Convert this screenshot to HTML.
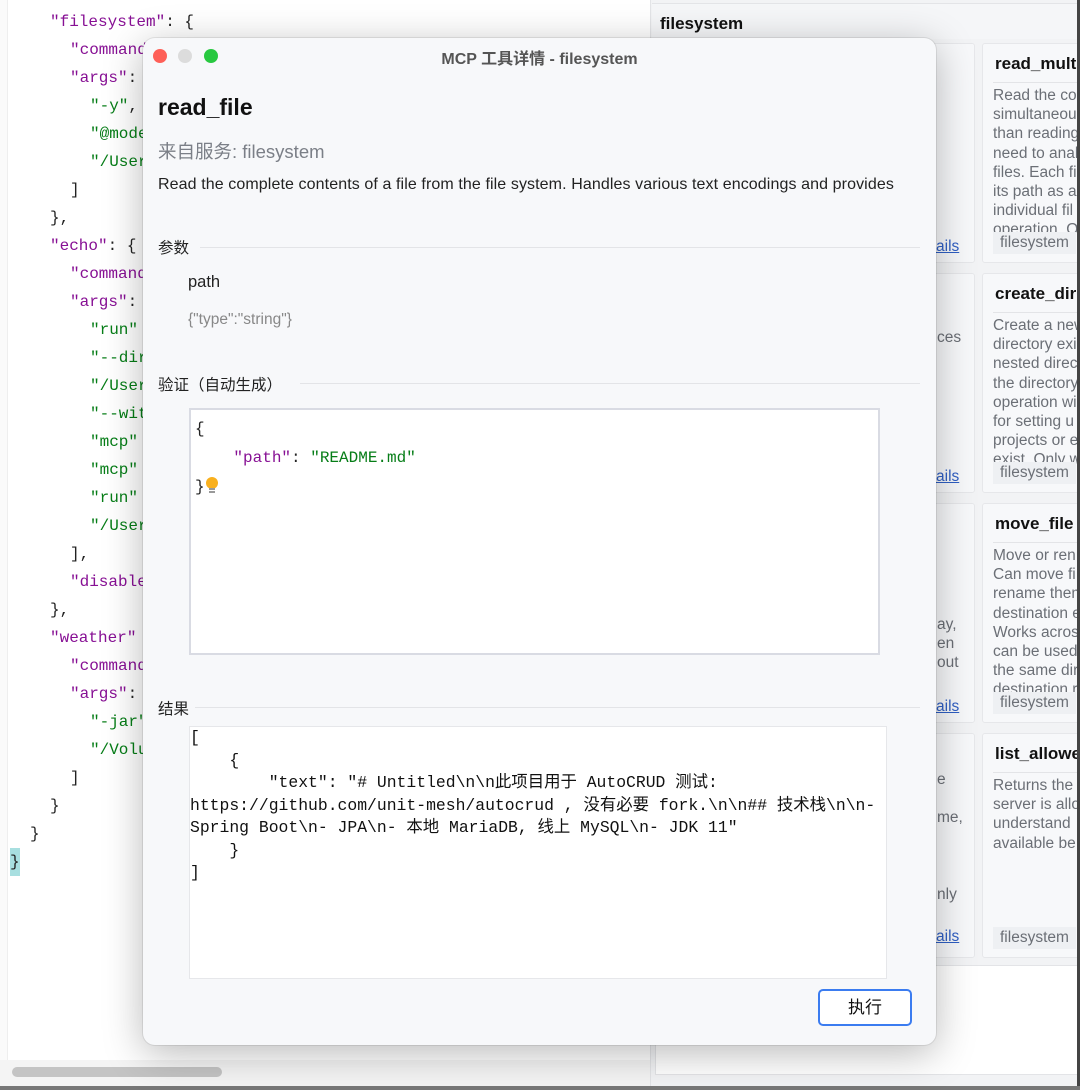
<!DOCTYPE html>
<html><head><meta charset="utf-8"><style>
*{margin:0;padding:0;box-sizing:border-box}
body{width:1080px;height:1090px;overflow:hidden;position:relative;background:#fff;font-family:"Liberation Sans","Noto Sans CJK SC",sans-serif}
.a{position:absolute;white-space:pre}
.code{font-family:"Liberation Mono","Noto Sans CJK SC",monospace;font-size:16px;color:#222}
.k{color:#871094}.s{color:#067d17}
.card{position:absolute;background:#f7f8fa;border:1px solid #e6e7ea;border-radius:3px;overflow:hidden}
.card .t{position:absolute;left:12px;top:10px;font-weight:bold;font-size:17px;color:#111;white-space:nowrap}
.card .hr{position:absolute;left:10px;right:0;top:38px;border-top:1px solid #e3e4e7}
.card .d{position:absolute;left:10px;top:42px;font-size:15.5px;line-height:19.2px;color:#6b6f76;white-space:pre}
.card .tag{position:absolute;left:10px;bottom:8px;background:#eef0f3;padding:2px 7px;font-size:15.5px;color:#6b6f76}
.lnk{position:absolute;color:#2f5fc4;text-decoration:underline;font-size:15.5px}
</style></head><body>
<div class="a" style="left:0;top:0;width:8px;height:1090px;background:#fafafa;border-right:1px solid #eee"></div>
<div class="a code" style="left:0;top:0;line-height:28px">
<div style="position:absolute;top:8px;left:50px"><span class="k">"filesystem"</span>: {</div>
<div style="position:absolute;top:36px;left:70px"><span class="k">"command</span></div>
<div style="position:absolute;top:64px;left:70px"><span class="k">"args"</span>:</div>
<div style="position:absolute;top:92px;left:90px"><span class="s">"-y"</span>,</div>
<div style="position:absolute;top:120px;left:90px"><span class="s">"@mode</span></div>
<div style="position:absolute;top:148px;left:90px"><span class="s">"/User</span></div>
<div style="position:absolute;top:176px;left:70px">]</div>
<div style="position:absolute;top:204px;left:50px">},</div>
<div style="position:absolute;top:232px;left:50px"><span class="k">"echo"</span>: {</div>
<div style="position:absolute;top:260px;left:70px"><span class="k">"command</span></div>
<div style="position:absolute;top:288px;left:70px"><span class="k">"args"</span>:</div>
<div style="position:absolute;top:316px;left:90px"><span class="s">"run"</span></div>
<div style="position:absolute;top:344px;left:90px"><span class="s">"--dir</span></div>
<div style="position:absolute;top:372px;left:90px"><span class="s">"/User</span></div>
<div style="position:absolute;top:400px;left:90px"><span class="s">"--wit</span></div>
<div style="position:absolute;top:428px;left:90px"><span class="s">"mcp"</span></div>
<div style="position:absolute;top:456px;left:90px"><span class="s">"mcp"</span></div>
<div style="position:absolute;top:484px;left:90px"><span class="s">"run"</span></div>
<div style="position:absolute;top:512px;left:90px"><span class="s">"/User</span></div>
<div style="position:absolute;top:540px;left:70px">],</div>
<div style="position:absolute;top:568px;left:70px"><span class="k">"disable</span></div>
<div style="position:absolute;top:596px;left:50px">},</div>
<div style="position:absolute;top:624px;left:50px"><span class="k">"weather"</span></div>
<div style="position:absolute;top:652px;left:70px"><span class="k">"command</span></div>
<div style="position:absolute;top:680px;left:70px"><span class="k">"args"</span>:</div>
<div style="position:absolute;top:708px;left:90px"><span class="s">"-jar"</span></div>
<div style="position:absolute;top:736px;left:90px"><span class="s">"/Volu</span></div>
<div style="position:absolute;top:764px;left:70px">]</div>
<div style="position:absolute;top:792px;left:50px">}</div>
<div style="position:absolute;top:820px;left:30px">}</div>
<div style="position:absolute;top:848px;left:10px;background:#a8dfe0">}</div>
</div>
<div class="a" style="left:0;top:1060px;width:650px;height:30px;background:#f4f4f4"></div>
<div class="a" style="left:12px;top:1067px;width:210px;height:10px;border-radius:5px;background:#c4c4c4"></div>
<div class="a" style="left:0;top:1086px;width:1080px;height:4px;background:#777"></div>
<div class="a" style="left:650px;top:0;width:428px;height:1086px;background:#f2f3f5;border-left:1px solid #e3e4e7"></div>
<div class="a" style="left:652px;top:3px;width:428px;height:36px;background:#f5f6f8;border-top:1px solid #e3e4e7"></div>
<div class="a" style="left:660px;top:14px;font-weight:bold;font-size:17px;color:#111">filesystem</div>
<div class="card" style="left:655px;top:43px;width:320px;height:220px"></div>
<div class="lnk" style="left:936px;top:238px">ails</div>
<div class="card" style="left:655px;top:273px;width:320px;height:220px"><div class="d" style="left:281px;top:54px">ces</div></div>
<div class="lnk" style="left:936px;top:468px">ails</div>
<div class="card" style="left:655px;top:503px;width:320px;height:220px"><div class="d" style="left:281px;top:111px">ay,
en
out
</div></div>
<div class="lnk" style="left:936px;top:698px">ails</div>
<div class="card" style="left:655px;top:733px;width:320px;height:225px"><div class="d" style="left:281px;top:36px">e

me,



nly</div></div>
<div class="lnk" style="left:936px;top:928px">ails</div>
<div class="card" style="left:982px;top:43px;width:110px;height:220px"><div class="t">read_multi</div><div class="hr"></div><div class="d">Read the co
simultaneou
than reading
need to anal
files. Each fi
its path as a
individual fil
operation. O</div><div class="tag">filesystem</div></div>
<div class="card" style="left:982px;top:273px;width:110px;height:220px"><div class="t">create_dir</div><div class="hr"></div><div class="d">Create a new
directory exi
nested direc
the directory
operation wi
for setting u
projects or e
exist. Only w</div><div class="tag">filesystem</div></div>
<div class="card" style="left:982px;top:503px;width:110px;height:220px"><div class="t">move_file</div><div class="hr"></div><div class="d">Move or ren
Can move fi
rename them
destination e
Works acros
can be used
the same dir
destination r</div><div class="tag">filesystem</div></div>
<div class="card" style="left:982px;top:733px;width:110px;height:225px"><div class="t">list_allowe</div><div class="hr"></div><div class="d">Returns the
server is allo
understand
available be</div><div class="tag">filesystem</div></div>
<div class="a" style="left:655px;top:965px;width:425px;height:110px;background:#fff;border:1px solid #e3e4e7"></div>
<div class="a" style="left:1077px;top:0;width:3px;height:1086px;background:#444"></div>
<div class="a" style="left:143px;top:38px;width:793px;height:1007px;background:#f7f8fa;border-radius:12px;box-shadow:0 8px 40px rgba(0,0,0,.28),0 0 0 1px rgba(0,0,0,.08)"></div>
<div class="a" style="left:153px;top:49px;width:14px;height:14px;border-radius:50%;background:#fe5f57"></div>
<div class="a" style="left:178px;top:49px;width:14px;height:14px;border-radius:50%;background:#dcdcdc"></div>
<div class="a" style="left:204px;top:49px;width:14px;height:14px;border-radius:50%;background:#28c840"></div>
<div class="a" style="left:143px;width:793px;top:45px;text-align:center;font-size:16px;font-weight:bold;color:#555">MCP 工具详情 - filesystem</div>
<div class="a" style="left:158px;top:94px;font-size:23px;font-weight:bold;color:#111">read_file</div>
<div class="a" style="left:158px;top:138px;font-size:18.5px;color:#7b7f87">来自服务: filesystem</div>
<div class="a" style="left:158px;top:176px;font-size:16px;letter-spacing:0.1px;color:#222">Read the complete contents of a file from the file system. Handles various text encodings and provides</div>
<div class="a" style="left:158px;top:236px;font-size:15.5px;color:#222">参数</div>
<div class="a" style="left:200px;top:247px;width:720px;border-top:1px solid #e3e4e7"></div>
<div class="a" style="left:188px;top:273px;font-size:16.5px;color:#222">path</div>
<div class="a" style="left:188px;top:311px;font-size:15.5px;color:#888">{"type":"string"}</div>
<div class="a" style="left:158px;top:373px;font-size:15.5px;color:#222">验证（自动生成）</div>
<div class="a" style="left:300px;top:383px;width:620px;border-top:1px solid #e3e4e7"></div>
<div class="a" style="left:189px;top:408px;width:691px;height:247px;background:#fff;border:2px solid #d9dbe3"></div>
<div class="a code" style="left:195px;top:415px;line-height:29px;font-size:16px">{
    <span class="k">"path"</span>: <span class="s">"README.md"</span>
}</div>
<div class="a" style="left:206px;top:477px;width:12px;height:12px;border-radius:50%;background:#f9b01e"></div>
<div class="a" style="left:209px;top:488px;width:6px;height:5px;border-top:2px solid #999;border-bottom:2px solid #999"></div>
<div class="a" style="left:158px;top:697px;font-size:15.5px;color:#222">结果</div>
<div class="a" style="left:195px;top:707px;width:725px;border-top:1px solid #e3e4e7"></div>
<div class="a" style="left:189px;top:726px;width:698px;height:253px;background:#fff;border:1px solid #e6e7ea"></div>
<div class="a code" style="left:190px;top:727px;line-height:22.5px;font-size:16.4px;color:#111">[
    {
        "text": "# Untitled\n\n此项目用于 AutoCRUD 测试:
https://github.com/unit-mesh/autocrud , 没有必要 fork.\n\n## 技术栈\n\n-
Spring Boot\n- JPA\n- 本地 MariaDB, 线上 MySQL\n- JDK 11"
    }
]</div>
<div class="a" style="left:818px;top:989px;width:94px;height:37px;border:2px solid #3b7cf0;border-radius:5px;background:#fff;text-align:center;line-height:33px;font-size:17px;color:#111">执行</div>
</body></html>
